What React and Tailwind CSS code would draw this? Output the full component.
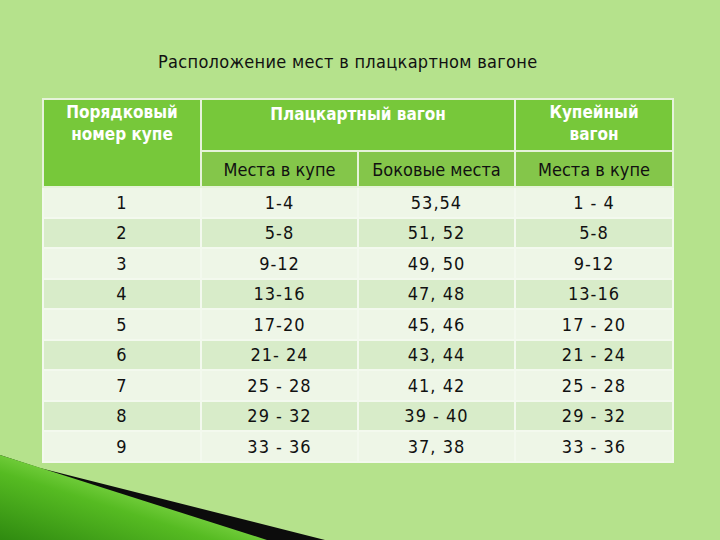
import React from 'react'

const rows = [
  ['1', '1-4', '53,54', '1 - 4'],
  ['2', '5-8', '51, 52', '5-8'],
  ['3', '9-12', '49, 50', '9-12'],
  ['4', '13-16', '47, 48', '13-16'],
  ['5', '17-20', '45, 46', '17 - 20'],
  ['6', '21- 24', '43, 44', '21 - 24'],
  ['7', '25 - 28', '41, 42', '25 - 28'],
  ['8', '29 - 32', '39 - 40', '29 - 32'],
  ['9', '33 - 36', '37, 38', '33 - 36'],
]

const Corner = () => (
  <svg className="absolute left-0 bottom-0" width="340" height="90" viewBox="0 0 340 90">
    <defs>
      <linearGradient id="g" x1="0" y1="1" x2="0.8" y2="0.2">
        <stop offset="0" stopColor="#2f8a10" />
        <stop offset="0.5" stopColor="#56bb22" />
        <stop offset="0.8" stopColor="#8fe056" />
        <stop offset="1" stopColor="#72d03a" />
      </linearGradient>
    </defs>
    <polygon points="0,5 40,18 325,90 0,90" fill="#0c0c0c" />
    <polygon points="0,5 267,90 0,90" fill="url(#g)" />
  </svg>
)

export default function App() {
  return (
    <div className="relative w-[720px] h-[540px] overflow-hidden bg-[#b5e28c]" style={{ fontFamily: '"DejaVu Sans Condensed", "DejaVu Sans", sans-serif' }}>
      <div className="pt-[50px] pl-[158px] text-[18px] leading-[24px] tracking-[0.3px] text-[#111]">Расположение мест в плацкартном вагоне</div>
      <table className="absolute left-[42px] top-[98px] w-[630px] border-collapse table-fixed text-[18px] text-[#111]">
        <colgroup>
          <col className="w-[158px]" />
          <col className="w-[157px]" />
          <col className="w-[157px]" />
          <col className="w-[158px]" />
        </colgroup>
        <thead>
          <tr className="h-[52px]">
            <th rowSpan={2} className="bg-[#77c83a] border-2 border-[#e6f3da] align-top pt-[1px] text-[17px] leading-[22px] font-bold text-white">Порядковый<br />номер купе</th>
            <th colSpan={2} className="bg-[#77c83a] border-2 border-[#e6f3da] align-top pt-[3px] text-[17px] leading-[22px] font-bold text-white">Плацкартный вагон</th>
            <th className="bg-[#77c83a] border-2 border-[#e6f3da] align-top pt-[1px] text-[17px] leading-[22px] font-bold text-white">Купейный<br />вагон</th>
          </tr>
          <tr className="h-[36px]">
            <th className="bg-[#84c64a] border-2 border-[#e6f3da] font-normal">Места в купе</th>
            <th className="bg-[#84c64a] border-2 border-[#e6f3da] font-normal">Боковые места</th>
            <th className="bg-[#84c64a] border-2 border-[#e6f3da] font-normal">Места в купе</th>
          </tr>
        </thead>
        <tbody>
          {rows.map((r, i) => (
            <tr key={i} className={i % 2 === 0 ? 'h-[30.5px] bg-[#eef6e7]' : 'h-[30.5px] bg-[#d8ecc9]'}>
              {r.map((c, j) => (
                <td key={j} className="border-2 border-[#f3f9ee] text-center tracking-[1px]">{c}</td>
              ))}
            </tr>
          ))}
        </tbody>
      </table>
      <Corner />
    </div>
  )
}
